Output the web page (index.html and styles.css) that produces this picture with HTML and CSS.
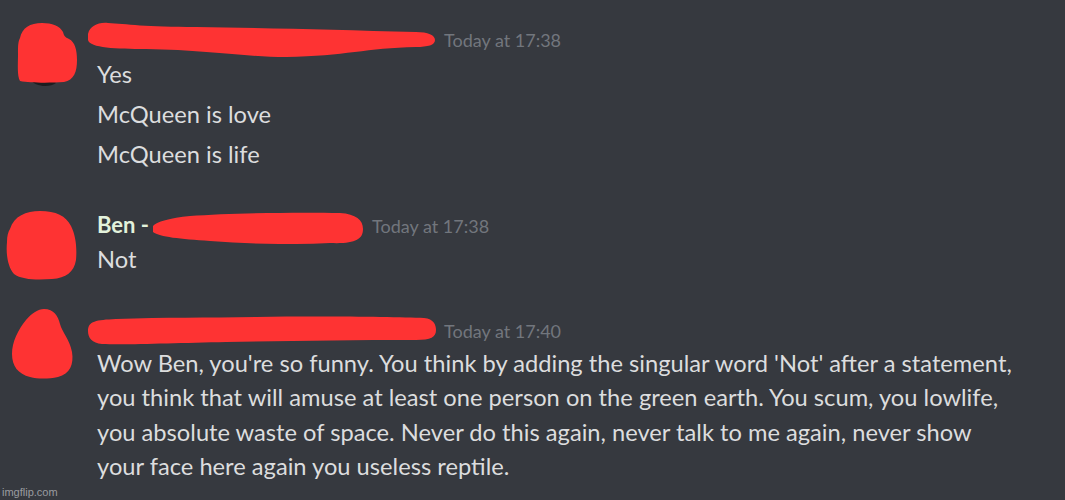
FILE: index.html
```html
<!DOCTYPE html>
<html lang="en">
<head>
    <meta charset="UTF-8">
    <title>Chat</title>
    <link rel="stylesheet" href="styles.css">
</head>
<body>
    <div class="chat">
        <div class="message first">
            <svg class="avatar" width="86" height="80" viewBox="0 0 86 80">
                <path d="M30 62 C34 70 50 71 56 66 L54 64 Z" fill="#1c1d20"/>
                <path d="M20 21 C22 11 30 6 42 6 C52 6 60 9 63 15 C64 19 65 20 69 22 C75 25 77 33 77 43 C77 55 74 63 64 65 C50 66 30 66 20 64 C17 59 18 47 18 37 C18 29 18 25 20 21 Z" fill="#fe3333"/>
            </svg>
            <div class="body">
                <div class="header">
                    <svg class="redact wide" width="350" height="40" viewBox="0 0 350 40">
                        <path d="M2 14 C4 6 12 2 22 3 C40 4 60 7 110 7 C180 8 250 10 330 12 C342 12 349 15 349 20 C349 25 342 27 330 27 C280 28 260 36 200 37 C160 37 120 30 60 29 C30 29 4 28 2 20 Z" fill="#fe3333"/>
                    </svg>
                    <span class="time">Today at 17:38</span>
                </div>
                <div class="line">Yes</div>
                <div class="line">McQueen is love</div>
                <div class="line">McQueen is life</div>
            </div>
        </div>

        <div class="message second">
            <svg class="avatar" width="86" height="80" viewBox="0 0 86 80">
                <path d="M10 28 C14 15 26 10 40 10 C56 10 66 15 71 25 C76 35 77 47 76 59 C74 71 66 77 52 78 C38 79 22 79 14 73 C7 65 6 51 7 41 C7 35 8 31 10 28 Z" fill="#fe3333"/>
            </svg>
            <div class="body">
                <div class="header">
                    <span class="name">Ben -</span>
                    <svg class="redact short" width="214" height="40" viewBox="0 0 214 40">
                        <path d="M3 22 C6 18 20 14 40 12 C80 9 150 8 190 9 C206 10 213 16 213 25 C213 36 204 40 180 39 C140 41 100 40 60 37 C30 35 10 33 3 28 Z" fill="#fe3333"/>
                    </svg>
                    <span class="time">Today at 17:38</span>
                </div>
                <div class="line">Not</div>
            </div>
        </div>

        <div class="message third">
            <svg class="avatar" width="86" height="80" viewBox="0 0 86 80">
                <path d="M44 1 C54 1 58 8 60 16 C62 24 70 32 72 44 C74 56 70 66 58 69 C48 71 38 71 30 69 C18 66 12 58 12 46 C12 34 18 22 26 12 C32 5 38 1 44 1 Z" fill="#fe3333"/>
            </svg>
            <div class="body">
                <div class="header">
                    <svg class="redact wide" width="350" height="40" viewBox="0 0 350 40">
                        <path d="M2 20 C2 10 10 9 30 8 C80 6 120 7 170 6 C240 5 310 6 338 7 C348 8 350 14 350 19 C350 26 345 29 330 29 C260 29 200 30 140 31 C90 32 40 34 16 33 C6 32 2 27 2 20 Z" fill="#fe3333"/>
                    </svg>
                    <span class="time">Today at 17:40</span>
                </div>
                <p class="paragraph">Wow Ben, you're so funny. You think by adding the singular word 'Not' after a statement,<br>
                you think that will amuse at least one person on the green earth. You scum, you lowlife,<br>
                you absolute waste of space. Never do this again, never talk to me again, never show<br>
                your face here again you useless reptile.</p>
            </div>
        </div>
    </div>
    <div class="watermark">imgflip.com</div>
</body>
</html>
```

FILE: styles.css
```css
body {
    background-color: #36393f;
    color: #dcddde;
    font-family: Lato, 'Noto Sans', sans-serif;
    font-size: 23.7px;
    margin: 0;
    padding: 0;
    width: 1065px;
    height: 500px;
    overflow: hidden;
    position: relative;
}

.chat {
    padding-top: 25px;
}

.message {
    display: flex;
    align-items: flex-start;
}

.avatar {
    flex: 0 0 86px;
    margin: -8px 0;
}

.body {
    flex: 1;
    padding-left: 11px;
}

.header {
    display: flex;
    align-items: center;
    height: 30px;
}

.first .header {
    height: 29px;
}

.redact {
    flex: 0 0 auto;
}

.redact.wide {
    margin-left: -11px;
}

.redact.short {
    margin-left: 1px;
}

.time {
    color: #72767d;
    font-size: 18px;
    margin-left: 8px;
}

.second .time {
    margin-top: 4px;
}

.name {
    color: #e3f2dc;
    font-size: 22px;
    font-weight: 700;
}

.line {
    line-height: 40px;
}

.second {
    margin-top: 35px;
}

.third {
    margin-top: 37px;
}

.paragraph {
    margin: 0;
    line-height: 34.4px;
    white-space: nowrap;
}

.watermark {
    position: absolute;
    left: 2px;
    bottom: 2px;
    font-family: 'Liberation Sans', sans-serif;
    font-size: 11px;
    color: #9a9ca0;
}
```
